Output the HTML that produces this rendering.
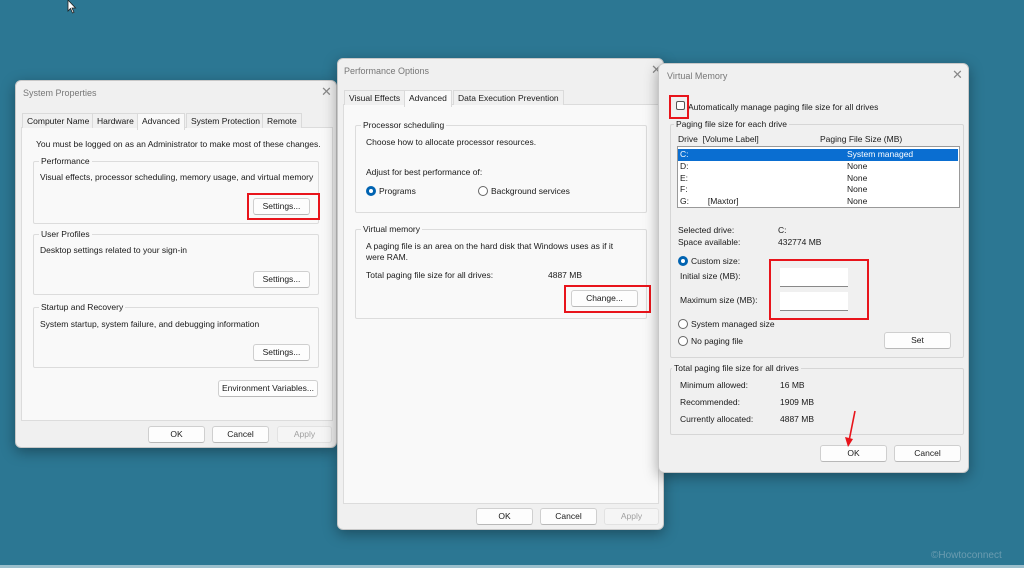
<!DOCTYPE html>
<html><head><meta charset="utf-8"><style>
*{margin:0;padding:0;box-sizing:border-box}
body{width:1024px;height:568px;position:relative;overflow:hidden;background:#2c7793;font-family:"Liberation Sans",sans-serif;font-size:8.5px;color:#1a1a1a}
.a{position:absolute;white-space:nowrap}
.dlg{position:absolute;background:#f0f0f0;border:1px solid #c8c8c8;border-radius:6px;box-shadow:0 4px 14px rgba(0,0,0,.35)}
.tt{color:#777;font-size:9px}
.x{color:#888;font-size:13px}
.panel{position:absolute;background:#f9f9f9;border:1px solid #dcdcdc}
.tab{position:absolute;background:#f0f0f0;border:1px solid #dadada;border-bottom:none;height:15px;line-height:14px;padding:0 4px;font-size:8.5px}
.tab.on{background:#f9f9f9;height:17px;top:-2px}
.grp{position:absolute;border:1px solid #dcdcdc;border-radius:2px}
.lg{position:absolute;top:-6px;left:5px;background:#f9f9f9;padding:0 2px}
.btn{position:absolute;background:#fdfdfd;border:1px solid #cfcfcf;border-bottom-color:#b8b8b8;border-radius:3px;text-align:center;line-height:15px;height:17px}
.dis{color:#a0a0a0;background:#f5f5f5;border-color:#e2e2e2}
.red{position:absolute;border:2px solid #e8141b}
.rad{position:absolute;width:10px;height:10px;border-radius:50%;border:1px solid #666;background:#fff}
.rad.on{border:3px solid #0063b1}
</style></head><body>
<svg class="a" style="left:67px;top:0" width="10" height="14" viewBox="0 0 10 14"><path d="M1 0 L1 11 L3.5 8.5 L5.5 13 L7 12.3 L5 8 L8.5 8 Z" fill="#fff" stroke="#222" stroke-width=".8"/></svg>

<!-- System Properties -->
<div class="dlg" style="left:15px;top:80px;width:322px;height:368px">
 <div class="a tt" style="left:7px;top:7px">System Properties</div>
 <div class="a x" style="left:305px;top:3px">✕</div>
 <div class="panel" style="left:5px;top:46px;width:312px;height:294px"></div>
 <div class="tab" style="left:6px;top:32px">Computer Name</div>
 <div class="tab" style="left:76px;top:32px">Hardware</div>
 <div class="tab on" style="left:121px;top:32px">Advanced</div>
 <div class="tab" style="left:170px;top:32px">System Protection</div>
 <div class="tab" style="left:246px;top:32px">Remote</div>
 <div class="a" style="left:20px;top:58px">You must be logged on as an Administrator to make most of these changes.</div>
 <div class="grp" style="left:17px;top:80px;width:286px;height:63px"><span class="lg">Performance</span></div>
 <div class="a" style="left:24px;top:91px">Visual effects, processor scheduling, memory usage, and virtual memory</div>
 <div class="btn" style="left:237px;top:117px;width:57px">Settings...</div>
 <div class="red" style="left:231px;top:112px;width:73px;height:27px"></div>
 <div class="grp" style="left:17px;top:153px;width:286px;height:61px"><span class="lg">User Profiles</span></div>
 <div class="a" style="left:24px;top:164px">Desktop settings related to your sign-in</div>
 <div class="btn" style="left:237px;top:190px;width:57px">Settings...</div>
 <div class="grp" style="left:17px;top:226px;width:286px;height:61px"><span class="lg">Startup and Recovery</span></div>
 <div class="a" style="left:24px;top:238px">System startup, system failure, and debugging information</div>
 <div class="btn" style="left:237px;top:263px;width:57px">Settings...</div>
 <div class="btn" style="left:202px;top:299px;width:100px">Environment Variables...</div>
 <div class="btn" style="left:132px;top:345px;width:57px">OK</div>
 <div class="btn" style="left:196px;top:345px;width:57px">Cancel</div>
 <div class="btn dis" style="left:261px;top:345px;width:55px">Apply</div>
</div>

<!-- Performance Options -->
<div class="dlg" style="left:337px;top:58px;width:327px;height:472px">
 <div class="a tt" style="left:6px;top:7px">Performance Options</div>
 <div class="a x" style="left:313px;top:3px">✕</div>
 <div class="panel" style="left:5px;top:45px;width:316px;height:400px"></div>
 <div class="tab" style="left:6px;top:31px">Visual Effects</div>
 <div class="tab on" style="left:66px;top:31px">Advanced</div>
 <div class="tab" style="left:115px;top:31px">Data Execution Prevention</div>
 <div class="grp" style="left:17px;top:66px;width:292px;height:88px"><span class="lg">Processor scheduling</span></div>
 <div class="a" style="left:28px;top:78px">Choose how to allocate processor resources.</div>
 <div class="a" style="left:28px;top:108px">Adjust for best performance of:</div>
 <div class="rad on" style="left:28px;top:127px"></div><div class="a" style="left:41px;top:127px">Programs</div>
 <div class="rad" style="left:140px;top:127px"></div><div class="a" style="left:153px;top:127px">Background services</div>
 <div class="grp" style="left:17px;top:170px;width:292px;height:90px"><span class="lg">Virtual memory</span></div>
 <div class="a" style="left:28px;top:182px">A paging file is an area on the hard disk that Windows uses as if it</div>
 <div class="a" style="left:28px;top:193px">were RAM.</div>
 <div class="a" style="left:28px;top:211px">Total paging file size for all drives:</div>
 <div class="a" style="left:210px;top:211px">4887 MB</div>
 <div class="btn" style="left:233px;top:231px;width:67px">Change...</div>
 <div class="red" style="left:226px;top:226px;width:87px;height:28px"></div>
 <div class="btn" style="left:138px;top:449px;width:57px">OK</div>
 <div class="btn" style="left:202px;top:449px;width:57px">Cancel</div>
 <div class="btn dis" style="left:266px;top:449px;width:55px">Apply</div>
</div>

<!-- Virtual Memory -->
<div class="dlg" style="left:658px;top:63px;width:311px;height:410px">
 <div class="a tt" style="left:8px;top:7px">Virtual Memory</div>
 <div class="a x" style="left:293px;top:3px">✕</div>
 <div class="a" style="left:17px;top:37px;width:9px;height:9px;border:1px solid #555;border-radius:2px;background:#fff"></div>
 <div class="a" style="left:29px;top:38px">Automatically manage paging file size for all drives</div>
 <div class="red" style="left:10px;top:31px;width:20px;height:24px"></div>
 <div class="grp" style="left:11px;top:60px;width:294px;height:234px;border-color:#d6d6d6"><span class="lg" style="background:#f0f0f0;left:3px">Paging file size for each drive</span></div>
 <div class="a" style="left:19px;top:70px">Drive&nbsp; [Volume Label]</div>
 <div class="a" style="left:161px;top:70px">Paging File Size (MB)</div>
 <div class="a" style="left:18px;top:82px;width:283px;height:62px;background:#fff;border:1px solid #999"></div>
 <div class="a" style="left:19px;top:85px;width:280px;height:12px;background:#0a6ed1"></div>
 <div class="a" style="left:21px;top:85px;color:#fff">C:</div><div class="a" style="left:188px;top:85px;color:#fff">System managed</div>
 <div class="a" style="left:21px;top:97px">D:</div><div class="a" style="left:188px;top:97px">None</div>
 <div class="a" style="left:21px;top:109px">E:</div><div class="a" style="left:188px;top:109px">None</div>
 <div class="a" style="left:21px;top:120px">F:</div><div class="a" style="left:188px;top:120px">None</div>
 <div class="a" style="left:21px;top:132px">G:&nbsp;&nbsp;&nbsp;&nbsp;&nbsp;&nbsp;&nbsp; [Maxtor]</div><div class="a" style="left:188px;top:132px">None</div>
 <div class="a" style="left:19px;top:161px">Selected drive:</div><div class="a" style="left:119px;top:161px">C:</div>
 <div class="a" style="left:19px;top:173px">Space available:</div><div class="a" style="left:119px;top:173px">432774 MB</div>
 <div class="rad on" style="left:19px;top:192px"></div><div class="a" style="left:32px;top:192px">Custom size:</div>
 <div class="a" style="left:21px;top:207px">Initial size (MB):</div>
 <div class="a" style="left:121px;top:204px;width:68px;height:19px;background:#fff;border-bottom:1px solid #888"></div>
 <div class="a" style="left:21px;top:231px">Maximum size (MB):</div>
 <div class="a" style="left:121px;top:228px;width:68px;height:19px;background:#fff;border-bottom:1px solid #888"></div>
 <div class="red" style="left:110px;top:195px;width:100px;height:61px"></div>
 <div class="rad" style="left:19px;top:255px"></div><div class="a" style="left:32px;top:255px">System managed size</div>
 <div class="rad" style="left:19px;top:272px"></div><div class="a" style="left:32px;top:272px">No paging file</div>
 <div class="btn" style="left:225px;top:268px;width:67px">Set</div>
 <div class="grp" style="left:11px;top:304px;width:294px;height:67px;border-color:#d6d6d6"><span class="lg" style="background:#f0f0f0;left:1px">Total paging file size for all drives</span></div>
 <div class="a" style="left:21px;top:316px">Minimum allowed:</div><div class="a" style="left:121px;top:316px">16 MB</div>
 <div class="a" style="left:21px;top:333px">Recommended:</div><div class="a" style="left:121px;top:333px">1909 MB</div>
 <div class="a" style="left:21px;top:350px">Currently allocated:</div><div class="a" style="left:121px;top:350px">4887 MB</div>
 <div class="btn" style="left:161px;top:381px;width:67px">OK</div>
 <div class="btn" style="left:235px;top:381px;width:67px">Cancel</div>
 <svg class="a" style="left:184px;top:345px" width="16" height="40" viewBox="0 0 16 40"><path d="M12 2 L6 32" stroke="#e8141b" stroke-width="1.6" fill="none"/><path d="M2 28 L5 38 L10 30 Z" fill="#e8141b"/></svg>
</div>

<div class="a" style="left:931px;top:550px;color:#6b9cb0;font-size:10px">©Howtoconnect</div>
<div class="a" style="left:0;top:565px;width:1024px;height:3px;background:#9bbfcc"></div>
</body></html>
